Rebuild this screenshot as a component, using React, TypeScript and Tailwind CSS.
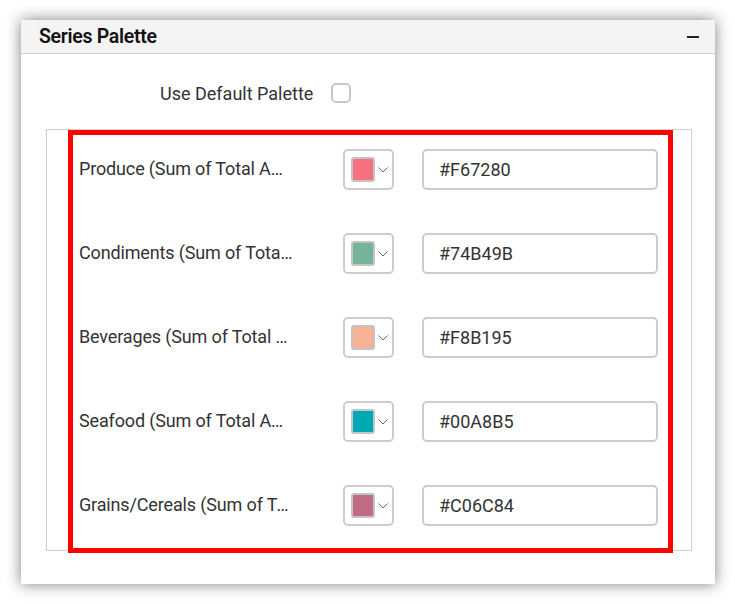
import React from "react";

const series = [
  { label: "Produce (Sum of Total Amount)", color: "#F67280" },
  { label: "Condiments (Sum of Total Amount)", color: "#74B49B" },
  { label: "Beverages (Sum of Total Amount)", color: "#F8B195" },
  { label: "Seafood (Sum of Total Amount)", color: "#00A8B5" },
  { label: "Grains/Cereals (Sum of Total Amount)", color: "#C06C84" },
];

function Chevron() {
  return (
    <svg width="10" height="6" viewBox="0 0 10 6" fill="none" className="ml-[3px]">
      <path d="M0.5 0.5 L5 5 L9.5 0.5" stroke="#666" strokeWidth="1" />
    </svg>
  );
}

export default function App() {
  return (
    <div
      className="w-[735px] h-[604px] bg-white pt-[20px] pl-[21px]"
      style={{ fontFamily: "Roboto, 'Liberation Sans', sans-serif" }}
    >
      <div className="w-[694px] h-[564px] bg-white shadow-[0_0_14px_rgba(0,0,0,0.5)]">
        {/* Header */}
        <div className="h-[34px] bg-[#f4f4f4] border-b border-[#d2d2d2] flex items-center justify-between pl-[18px] pr-[16px]">
          <span className="text-[19.5px] font-semibold text-[#111] tracking-[-0.3px]">Series Palette</span>
          <span className="w-[12px] h-[2px] bg-[#222] mt-[1px]" />
        </div>

        {/* Default palette toggle */}
        <div className="flex items-center pl-[139px] mt-[28px] h-[22px]">
          <span className="text-[18px] text-[#333]">Use Default Palette</span>
          <span className="ml-[18px] w-[20px] h-[20px] border-2 border-[#c8c8c8] rounded-[5px]" />
        </div>

        {/* Palette list */}
        <div className="mt-[25px] ml-[25px] w-[646px] h-[422px] border border-[#cfcfcf]">
          <div className="ml-[21px] w-[605px] h-[423px] border-[5px] border-[#ff0000] pt-[14px] pl-[6px] flex flex-col gap-[43px]">
            {series.map((s) => (
              <div key={s.label} className="flex items-center h-[41px]">
                <span className="w-[215px] truncate text-[18px] tracking-[-0.15px] text-[#333] -mt-[3px]">{s.label}</span>
                <div className="ml-[49px] w-[51px] h-[41px] border-2 border-[#cdcdcd] rounded-[5px] flex items-center pl-[6px]">
                  <span
                    className="w-[24px] h-[25px] border-2 border-[#c4c4c4] rounded-[3px]"
                    style={{ backgroundColor: s.color }}
                  />
                  <Chevron />
                </div>
                <div className="ml-[28px] w-[236px] h-[41px] border-2 border-[#cdcdcd] rounded-[5px] flex items-center pl-[15px] text-[18px] text-[#333]">
                  {s.color}
                </div>
              </div>
            ))}
          </div>
        </div>
      </div>
    </div>
  );
}
